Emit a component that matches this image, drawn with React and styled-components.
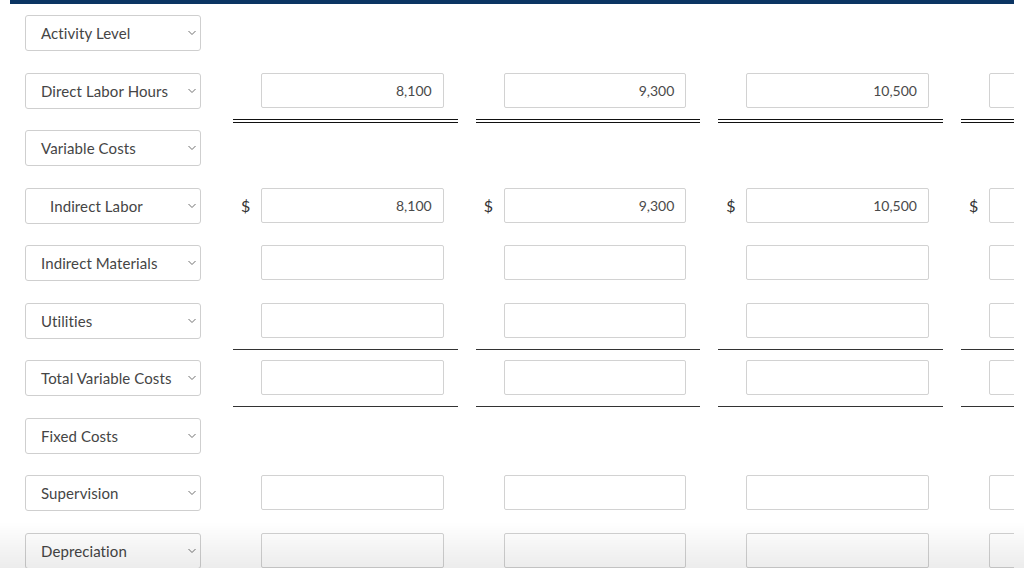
import React from "react";
import styled, { createGlobalStyle } from "styled-components";

const Global = createGlobalStyle`
  html, body { margin: 0; padding: 0; background: #fff; overflow: hidden; }
  body { font-family: Lato, "Open Sans", Arial, sans-serif; color: #333; }
  * { box-sizing: border-box; }
`;

const Page = styled.div`
  width: 1004px;
  margin: 0 10px;
  overflow: hidden;
`;

const TopBar = styled.div`
  height: 4px;
  background: #0b3563;
`;

const Sheet = styled.div`
  padding: 11px 0 0 15px;
  display: flex;
  flex-direction: column;
`;

const Row = styled.div`
  height: 57.56px;
  display: flex;
  align-items: flex-start;
  flex-shrink: 0;
`;

const SelectBox = styled.div`
  width: 176px;
  height: 36px;
  flex-shrink: 0;
  border: 1px solid #cfcfcf;
  border-radius: 3px;
  background: #fff;
  display: flex;
  align-items: center;
  justify-content: space-between;
  padding: 0 3px 0 ${(p) => (p.$indent ? 24 : 15)}px;
  font-size: 15px;
  letter-spacing: 0.1px;
  color: #454545;
  white-space: nowrap;
`;

const Cells = styled.div`
  display: grid;
  grid-template-columns: repeat(4, 224.67px);
  column-gap: 18px;
  margin-left: 32px;
  flex-shrink: 0;
`;

const Cell = styled.div`
  display: flex;
  align-items: center;
  padding: 0 14px ${(p) => (p.$line ? 11 : 0)}px 0;
  border-bottom: ${(p) =>
    p.$line === "double" ? "4px double #111" : p.$line === "single" ? "1px solid #333" : "none"};
`;

const Dollar = styled.span`
  width: 28px;
  flex-shrink: 0;
  padding-left: 8px;
  font-size: 16px;
  color: #333;
  line-height: 35px;
`;

const Input = styled.div`
  width: 183px;
  height: 35px;
  border: 1px solid #d2d2d2;
  border-radius: 2px;
  background: #fff;
  display: flex;
  align-items: center;
  justify-content: flex-end;
  padding-right: 11px;
  font-size: 14px;
  color: #4a4a4a;
`;

const Fade = styled.div`
  position: fixed;
  left: 0;
  right: 0;
  bottom: 0;
  height: 46px;
  pointer-events: none;
  background: linear-gradient(to bottom, rgba(0, 0, 0, 0), rgba(0, 0, 0, 0.075));
`;

const Chevron = () => (
  <svg width="10" height="6" viewBox="0 0 10 6" fill="none">
    <path d="M1.5 1 L5 4.5 L8.5 1" stroke="#707070" strokeWidth="1" />
  </svg>
);

const rows = [
  { label: "Activity Level" },
  { label: "Direct Labor Hours", values: ["8,100", "9,300", "10,500", ""], line: "double" },
  { label: "Variable Costs" },
  { label: "Indirect Labor", indent: true, dollar: true, values: ["8,100", "9,300", "10,500", ""] },
  { label: "Indirect Materials", values: ["", "", "", ""] },
  { label: "Utilities", values: ["", "", "", ""], line: "single" },
  { label: "Total Variable Costs", values: ["", "", "", ""], line: "single" },
  { label: "Fixed Costs" },
  { label: "Supervision", values: ["", "", "", ""] },
  { label: "Depreciation", values: ["", "", "", ""] },
];

export default function App() {
  return (
    <>
      <Global />
      <Page>
        <TopBar />
        <Sheet>
          {rows.map((r) => (
            <Row key={r.label}>
              <SelectBox $indent={r.indent} role="combobox">
                <span>{r.label}</span>
                <Chevron />
              </SelectBox>
              {r.values && (
                <Cells>
                  {r.values.map((v, i) => (
                    <Cell key={i} $line={r.line}>
                      <Dollar>{r.dollar ? "$" : ""}</Dollar>
                      <Input>{v}</Input>
                    </Cell>
                  ))}
                </Cells>
              )}
            </Row>
          ))}
        </Sheet>
      </Page>
      <Fade />
    </>
  );
}
